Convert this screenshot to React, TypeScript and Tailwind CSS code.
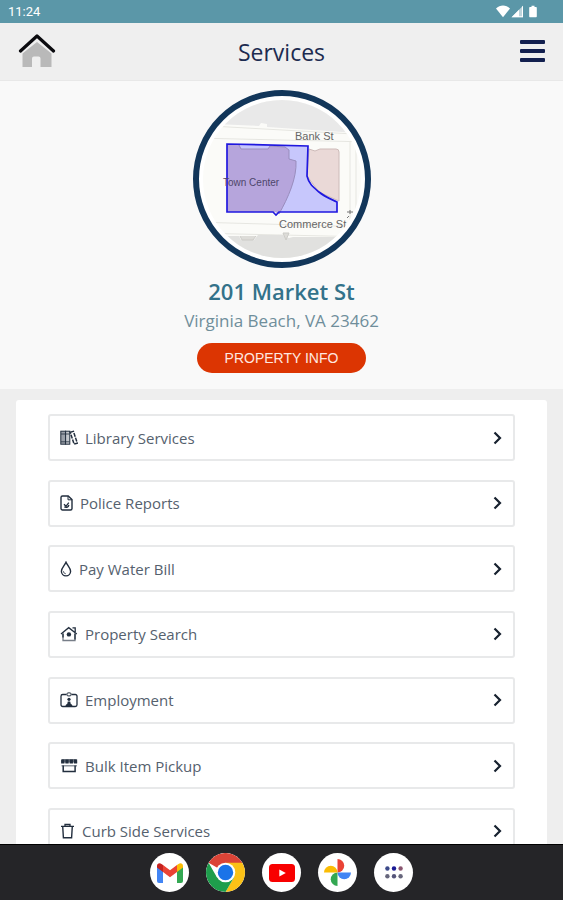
import type { ReactNode } from "react";

type Service = {
  label: string;
  icon: ReactNode;
};

const services: Service[] = [
  {
    label: "Library Services",
    icon: (
      <svg className="h-4 w-[18px]" viewBox="0 0 18 16" fill="none" stroke="currentColor" aria-hidden="true">
        <rect x="0.8" y="1.2" width="4.8" height="13" fill="#9aa0a9" />
        <rect x="5.6" y="1.2" width="4.2" height="13" fill="#c3c7cc" />
        <path d="M1 4h8.500M1 11.800h8.500" strokeWidth="0.8" />
        <path d="M10.200 2.200l3.200-.9 3.900 11.800-3.200 1z" strokeWidth="1.500" strokeDasharray="4 1" />
      </svg>
    ),
  },
  {
    label: "Police Reports",
    icon: (
      <svg className="h-4 w-[13px]" viewBox="0 0 13 16" fill="none" stroke="currentColor" aria-hidden="true">
        <path d="M2.500 1h5.700L12 4.600V13.500a1.500 1.500 0 0 1-1.500 1.500h-8A1.500 1.500 0 0 1 1 13.500v-11A1.500 1.500 0 0 1 2.500 1z" strokeWidth="1.400" />
        <path d="M8 1v3.800h4" />
        <path d="M4 9.300l2 2L8.800 7.600M4.300 11.800c1.500 1.200 4 .8 4.600-1.800" strokeWidth="1.300" />
      </svg>
    ),
  },
  {
    label: "Pay Water Bill",
    icon: (
      <svg className="h-4 w-3" viewBox="0 0 12 16" fill="none" stroke="currentColor" aria-hidden="true">
        <path d="M6 1.200C4.800 4.200 1.400 7 1.400 10.300a4.600 4.600 0 0 0 9.200 0C10.600 7 7.200 4.200 6 1.200z" strokeWidth="1.400" />
        <path d="M3.500 10.300c.1 1.500 1 2.300 2.200 2.400" strokeWidth="0.900" />
      </svg>
    ),
  },
  {
    label: "Property Search",
    icon: (
      <svg className="h-4 w-[18px]" viewBox="0 0 18 16" fill="none" stroke="currentColor" aria-hidden="true">
        <path d="M1 8l7.700-6.300L16.800 8M12.500 1.800h2.700v4.200" strokeWidth="1.300" />
        <path d="M3 7.500v7h12v-7" strokeWidth="1.300" stroke="#777e88" />
        <path d="M3 7.500v4M15 7.500v6" strokeWidth="1.300" />
        <circle cx="8.900" cy="8.400" r="2.200" fill="currentColor" stroke="none" />
      </svg>
    ),
  },
  {
    label: "Employment",
    icon: (
      <svg className="h-4 w-[18px]" viewBox="0 0 18 16" fill="none" stroke="currentColor" aria-hidden="true">
        <path d="M6.500 2.500H2.700A1.700 1.700 0 0 0 1 4.200v8.600a1.700 1.700 0 0 0 1.700 1.700h12.600a1.700 1.700 0 0 0 1.700-1.700V4.200a1.700 1.700 0 0 0-1.700-1.700h-3.800" strokeWidth="1.300" />
        <rect x="7" y="0.900" width="4" height="3" rx="1" />
        <circle cx="9" cy="7.300" r="1.600" fill="currentColor" stroke="none" />
        <path d="M5.500 14.200h7c0-1-.8-1.900-1.700-2.100L10.200 9.400H7.800l-.6 2.700c-1 .2-1.700 1.100-1.700 2.100z" fill="currentColor" stroke="none" />
      </svg>
    ),
  },
  {
    label: "Bulk Item Pickup",
    icon: (
      <svg className="h-4 w-[18px]" viewBox="0 0 18 16" fill="none" stroke="currentColor" aria-hidden="true">
        <path d="M2 1h14.500l.8 3.500H1z" fill="#777e88" stroke="none" />
        <path d="M2.800 1.500v4M7 1.500v4M11.300 1.500v4M15.500 1.500v4" strokeWidth="3.300" />
        <path d="M1.500 7.800h15.500" stroke="#777e88" strokeWidth="1.200" />
        <path d="M3.200 7.500v6h11.900v-6" strokeWidth="1.500" />
      </svg>
    ),
  },
  {
    label: "Curb Side Services",
    icon: (
      <svg className="h-4 w-[15px]" viewBox="0 0 15 16" fill="none" stroke="currentColor" aria-hidden="true">
        <path d="M1 3.300h13M5 3.300V1.500h5v1.800" strokeWidth="1.300" />
        <path d="M2.700 3.300l.7 11.400h8.200l.7-11.400" strokeWidth="1.400" />
      </svg>
    ),
  },
];

const apps: Service[] = [
  {
    label: "Gmail",
    icon: (
      <svg className="w-[26px]" viewBox="0 0 26 20" aria-hidden="true">
        <path d="M0 3v15a2 2 0 0 0 2 2h4V7z" fill="#4285f4" />
        <path d="M26 3v15a2 2 0 0 1-2 2h-4V7z" fill="#34a853" />
        <path d="M20 2v7l6-4.500V3c0-2.500-2.500-3.500-4.500-2z" fill="#fbbc04" />
        <path d="M6 9V2l7 5.200L20 2v7l-7 5.200z" fill="#ea4335" />
        <path d="M0 3v1.500L6 9V2L4.500 1C2.500-.5 0 .5 0 3z" fill="#c5221f" />
      </svg>
    ),
  },
  {
    label: "Chrome",
    icon: (
      <svg className="w-[39px]" viewBox="0 0 48 48" aria-hidden="true">
        <path d="M24 24L3.200 12A24 24 0 0 1 44.800 12z" fill="#db4437" />
        <path d="M24 12h20.800A24 24 0 0 1 24 48l10.400-18z" fill="#fbc116" />
        <path d="M3.200 12A24 24 0 0 0 24 48l10.400-18-20.800 0z" fill="#1e9e4c" />
        <circle cx="24" cy="24" r="12" fill="#fff" />
        <circle cx="24" cy="24" r="9.500" fill="#1a73e8" />
      </svg>
    ),
  },
  {
    label: "YouTube",
    icon: (
      <svg className="w-[26px]" viewBox="0 0 26 18" aria-hidden="true">
        <rect width="26" height="18" rx="3.500" fill="#f80000" />
        <path d="M10.300 5.500v7l6.500-3.500z" fill="#fff" />
      </svg>
    ),
  },
  {
    label: "Photos",
    icon: (
      <svg className="w-[27px]" viewBox="0 0 28 28" aria-hidden="true">
        <path d="M14 0a7 7 0 0 1 0 14z" fill="#ea4335" />
        <path d="M28 14a7 7 0 0 1-14 0z" fill="#4285f4" />
        <path d="M14 28a7 7 0 0 1 0-14z" fill="#34a853" />
        <path d="M0 14a7 7 0 0 1 14 0z" fill="#fbbc04" />
      </svg>
    ),
  },
  {
    label: "All apps",
    icon: (
      <svg className="w-[18px]" viewBox="0 0 18 13" aria-hidden="true">
        <circle cx="2.400" cy="2.500" r="2.200" fill="#3c4a8a" />
        <circle cx="9" cy="2.500" r="2.200" fill="#1a1a94" />
        <circle cx="15.600" cy="2.500" r="2.200" fill="#8a5670" />
        <circle cx="2.400" cy="10.200" r="2.200" fill="#66667c" />
        <circle cx="9" cy="10.200" r="2.200" fill="#55557a" />
        <circle cx="15.600" cy="10.200" r="2.200" fill="#66667c" />
      </svg>
    ),
  },
];

function StatusBar() {
  return (
    <div className="flex h-[23px] shrink-0 items-center justify-between bg-[#5b97a8] pl-2 pr-[25px] text-white">
      <span className="font-[Roboto,sans-serif] text-[13px] leading-4">11:24</span>
      <svg className="h-[13px] w-[42px]" viewBox="0 0 42 13" fill="#fff" aria-hidden="true">
        <path d="M0 3.500C4-.5 10-.5 14 3.500L7 12.300z" />
        <path d="M15.500 12.300L27 .7v11.600z" fillOpacity="0.600" />
        <path d="M15.500 12.300L23 4.700v7.600zM23 11.300h4v1h-4zM26 1.700l1-1v11.600h-1z" />
        <path d="M35.500.7h3V2h1.300c.6 0 1 .4 1 1v8.300c0 .6-.4 1-1 1h-5.600c-.6 0-1-.4-1-1V3c0-.6.4-1 1-1h1.300z" />
      </svg>
    </div>
  );
}

function Header() {
  return (
    <header className="flex h-[58px] shrink-0 items-center justify-between border-b border-[#e8e8e8] bg-[#efefef] px-[18px]">
      <a href="#home" aria-label="Home" className="w-[38px]">
        <svg className="h-[35px] w-[38px]" viewBox="0 0 38 35" fill="none" aria-hidden="true">
          <path d="M19 8L4.500 19.500V33H14V24.500a2 2 0 0 1 2-2h4.500a2 2 0 0 1 2 2V33H33.500V19.500z" fill="#b9b9b9" />
          <path d="M2.500 17L19 2l16.500 15" stroke="#0b0b0f" strokeWidth="3.200" strokeLinecap="round" strokeLinejoin="round" />
        </svg>
      </a>
      <h1 className="text-[23px] font-medium leading-7 text-[#1c2b50]">Services</h1>
      <button type="button" aria-label="Menu" className="flex w-[38px] justify-end">
        <svg className="h-6 w-[25px]" viewBox="0 0 25 24" fill="#13204f" aria-hidden="true">
          <rect y="0" width="25" height="4" rx="1" />
          <rect y="9" width="25" height="4" rx="1" />
          <rect y="18" width="25" height="4" rx="1" />
        </svg>
      </button>
    </header>
  );
}

function PropertyMap() {
  return (
    <svg className="h-[178px] w-[178px]" viewBox="0 0 178 178" role="img" aria-label="Property map">
      <defs>
        <clipPath id="map-clip">
          <circle cx="89" cy="89" r="79" />
        </clipPath>
      </defs>
      <circle cx="89" cy="89" r="86" fill="#fff" />
      <g clipPath="url(#map-clip)" fontFamily="Liberation Sans, Arial, sans-serif">
        <rect width="178" height="178" fill="#fbfbf8" />
        <path d="M0 0h178v44L74 37v-3l-6-1-2 3L0 33z" fill="#e9e9e9" />
        <path d="M0 35l178 10M0 48l178 4M0 132l178 5M0 143l178 4M157 51v84M163 51v84" stroke="#e6e6e1" fill="none" />
        <path d="M20 146h26l2 4h13l4-5h25l2 2 4 1 4-1h78v40H20z" fill="#e1e1df" />
        <path d="M47 146l2 4h11l3-4M90 143h6l-3 7z" fill="#dddcd8" stroke="#cccbc7" />
        <path d="M116 59l6 2 5-2h16q3 0 3 3v49l-20-9-12-16z" fill="#ead9d7" stroke="#cdbab8" />
        <path d="M34 54l81 2-1 30c2 8 6 11 12 16s12 7 18 10v10H34z" fill="#c7c7fc" />
        <path d="M34 54l12 1 2 4h27l2-3 15 1 4 3v9l7 2c1 17-8 37-17 53l-4-2H34z" fill="#b6a5dc" />
        <path d="M46 55l2 4h27l2-3 15 1 4 3v9l7 2c1 17-8 37-17 53" fill="none" stroke="#998dbd" />
        <path d="M34 54l81 2-1 30c2 8 6 11 12 16s12 7 18 10v10H86l-3 3-3-3H34z" fill="none" stroke="#2018df" strokeWidth="1.700" />
        <text x="102" y="50" fontSize="11" fill="#666">Bank St</text>
        <text x="30" y="96" fontSize="10" fill="#4d466b">Town Center</text>
        <text x="86" y="138" fontSize="11" fill="#666">Commerce St</text>
        <path d="M154 122h6M157 120v4M154 128l2-2" stroke="#777" />
      </g>
      <circle cx="89" cy="89" r="86" fill="none" stroke="#12365a" strokeWidth="6" />
    </svg>
  );
}

export default function App() {
  return (
    <div className="flex h-screen flex-col overflow-hidden bg-[#eeeeee] font-['Open_Sans',sans-serif]">
      <StatusBar />
      <Header />

      <main className="min-h-0 flex-1 overflow-hidden">
        <section className="flex flex-col items-center bg-[#f9f9f9] pb-4 pt-[9px]">
          <PropertyMap />
          <h2 className="mt-2 text-[22px] font-semibold leading-[30px] text-[#33728a]">201 Market St</h2>
          <p className="mt-[3px] text-[17px] leading-6 text-[#6f8e9b]">Virginia Beach, VA 23462</p>
          <button
            type="button"
            className="mt-[10px] h-[30px] rounded-full bg-[#dc3502] px-7 font-['Liberation_Sans',Arial,sans-serif] text-[14px] leading-5 text-[#ffe8e0]"
          >
            PROPERTY INFO
          </button>
        </section>

        <section className="mx-4 mt-[11px] rounded-t-[3px] bg-white px-8 pb-5 pt-[14px]">
          <ul className="flex min-h-[441px] flex-col justify-between">
            {services.map((service) => (
              <li key={service.label}>
                <button
                  type="button"
                  className="flex h-[47px] w-full items-center rounded-[3px] border-2 border-[#e8e9ea] bg-white pl-[10px] pr-[11px] text-left text-[#222e3e]"
                >
                  {service.icon}
                  <span className="ml-[7px] flex-1 text-[15px] leading-5 text-[#55616e]">{service.label}</span>
                  <svg className="h-[14px] w-[9px]" viewBox="0 0 9 14" fill="none" aria-hidden="true">
                    <path d="M1.500 1.500L7 7l-5.500 5.500" stroke="#17212f" strokeWidth="2.200" />
                  </svg>
                </button>
              </li>
            ))}
          </ul>
        </section>
      </main>

      <nav className="flex h-14 shrink-0 items-center justify-center gap-[17px] border-t border-black bg-[#252528]">
        {apps.map((app) => (
          <button
            key={app.label}
            type="button"
            aria-label={app.label}
            className="flex h-[39px] w-[39px] items-center justify-center overflow-hidden rounded-full bg-white"
          >
            {app.icon}
          </button>
        ))}
      </nav>
    </div>
  );
}
